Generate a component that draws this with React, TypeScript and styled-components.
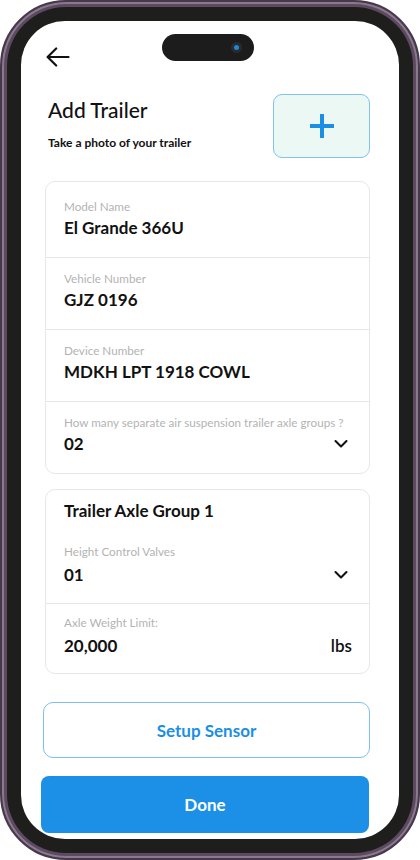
import React from "react";
import styled, { createGlobalStyle } from "styled-components";

const GlobalStyle = createGlobalStyle`
  html, body { margin: 0; padding: 0; background: #ffffff; }
  body { font-family: Lato, "Open Sans", sans-serif; color: #111111; }
  * { box-sizing: border-box; }
`;

const Phone = styled.div`
  width: 420px;
  height: 860px;
  border-radius: 66px;
  background: #5d4a61;
  border: 2px solid #47384b;
  box-shadow: inset 0 0 0 2px #8a7a8d;
  padding: 5px;
`;

const Bezel = styled.div`
  width: 100%;
  height: 100%;
  background: #1e1e1c;
  border-radius: 59px;
  padding: 14px;
`;

const Screen = styled.div`
  position: relative;
  width: 100%;
  height: 100%;
  background: #ffffff;
  border-radius: 44px;
  overflow: hidden;
  display: flex;
  flex-direction: column;
  padding: 26px 29px 0 24px;
`;

const Island = styled.div`
  position: absolute;
  left: 141px;
  top: 13px;
  width: 92px;
  height: 27px;
  border-radius: 14px;
  background: #1c1c1c;
`;

const Camera = styled.div`
  position: absolute;
  right: 12px;
  top: 8px;
  width: 11px;
  height: 11px;
  border-radius: 50%;
  background: #2a2a2e;
  display: flex;
  align-items: center;
  justify-content: center;
  &::after {
    content: "";
    width: 5px;
    height: 5px;
    border-radius: 50%;
    background: #1a8ad8;
  }
`;

const Header = styled.div`
  display: flex;
  align-items: center;
  height: 20px;
  padding-left: 1px;
`;

const BackButton = styled.button`
  border: none;
  background: none;
  padding: 0;
  display: flex;
  cursor: pointer;
`;

const TitleRow = styled.div`
  margin-top: 27px;
  display: flex;
  justify-content: space-between;
  align-items: flex-start;
`;

const TitleCol = styled.div`
  padding-top: 3px;
  padding-left: 3px;
  display: flex;
  flex-direction: column;
`;

const Title = styled.h1`
  margin: 0;
  font-size: 21px;
  line-height: 25px;
  font-weight: 500;
  color: #111111;
`;

const Subtitle = styled.p`
  margin: 14px 0 0;
  font-size: 12px;
  line-height: 14px;
  font-weight: 700;
  color: #111111;
`;

const PhotoBox = styled.button`
  width: 97px;
  height: 64px;
  border-radius: 9px;
  border: 1.5px solid #80c2f2;
  background: #ebf8f3;
  display: flex;
  align-items: center;
  justify-content: center;
  padding: 0;
  cursor: pointer;
`;

const Card = styled.div<{ $mt: number }>`
  margin-top: ${(p) => p.$mt}px;
  border: 1px solid #e7e7e7;
  border-radius: 10px;
  display: flex;
  flex-direction: column;
`;

const Field = styled.div<{ $pt?: number; $pb?: number; $divider?: boolean }>`
  padding: ${(p) => p.$pt ?? 13}px 17px ${(p) => p.$pb ?? 18}px 18px;
  border-top: ${(p) => (p.$divider ? "1px solid #e7e7e7" : "none")};
  display: flex;
  flex-direction: column;
`;

const CardTitle = styled.div`
  font-size: 17px;
  line-height: 20px;
  font-weight: 700;
  margin-bottom: 23px;
`;

const Label = styled.div`
  font-size: 11.7px;
  line-height: 14px;
  color: #b3b3b3;
  white-space: nowrap;
`;

const ValueRow = styled.div<{ $gap?: number }>`
  margin-top: ${(p) => p.$gap ?? 4}px;
  height: 22px;
  display: flex;
  align-items: center;
  justify-content: space-between;
`;

const Value = styled.span`
  font-size: 17px;
  line-height: 22px;
  font-weight: 700;
  color: #111111;
`;

const Unit = styled.span`
  font-size: 17px;
  line-height: 22px;
  font-weight: 600;
  color: #111111;
`;

const OutlineButton = styled.button`
  margin: 28px 0 0 -2px;
  width: 327px;
  height: 56px;
  border: 1px solid #7dbff0;
  border-radius: 10px;
  background: #ffffff;
  color: #1b8fe5;
  font-family: Lato, "Open Sans", sans-serif;
  font-size: 17px;
  font-weight: 700;
  cursor: pointer;
`;

const PrimaryButton = styled.button`
  margin: 18px 0 0 -4px;
  width: 328px;
  height: 57px;
  border: none;
  border-radius: 8px;
  background: #1b90e6;
  color: #ffffff;
  font-family: Lato, "Open Sans", sans-serif;
  font-size: 17px;
  font-weight: 700;
  cursor: pointer;
`;

const Chevron = () => (
  <svg width="16" height="10" viewBox="0 0 16 10" fill="none" style={{ marginRight: 3 }}>
    <polyline points="2.5,2 8,7.5 13.5,2" stroke="#111" strokeWidth="2.1" strokeLinecap="round" strokeLinejoin="round" />
  </svg>
);

const BackArrow = () => (
  <svg width="24" height="20" viewBox="0 0 24 20" fill="none">
    <path d="M22.5 10H1.8M10.2 1.5L1.6 10l8.6 8.5" stroke="#111" strokeWidth="2.2" strokeLinecap="round" strokeLinejoin="round" />
  </svg>
);

const PlusIcon = () => (
  <svg width="26" height="26" viewBox="0 0 26 26" fill="none">
    <path d="M13 1v24M1 13h24" stroke="#1b8fe3" strokeWidth="4" />
  </svg>
);

export default function App() {
  return (
    <>
      <GlobalStyle />
      <Phone>
        <Bezel>
          <Screen>
            <Island>
              <Camera />
            </Island>
            <Header>
              <BackButton aria-label="Back">
                <BackArrow />
              </BackButton>
            </Header>
            <TitleRow>
              <TitleCol>
                <Title>Add Trailer</Title>
                <Subtitle>Take a photo of your trailer</Subtitle>
              </TitleCol>
              <PhotoBox aria-label="Add photo">
                <PlusIcon />
              </PhotoBox>
            </TitleRow>

            <Card $mt={23}>
              <Field $pt={17}>
                <Label>Model Name</Label>
                <ValueRow>
                  <Value>El Grande 366U</Value>
                </ValueRow>
              </Field>
              <Field $divider>
                <Label>Vehicle Number</Label>
                <ValueRow>
                  <Value>GJZ 0196</Value>
                </ValueRow>
              </Field>
              <Field $divider>
                <Label>Device Number</Label>
                <ValueRow>
                  <Value>MDKH LPT 1918 COWL</Value>
                </ValueRow>
              </Field>
              <Field $divider>
                <Label>How many separate air suspension trailer axle groups ?</Label>
                <ValueRow>
                  <Value>02</Value>
                  <Chevron />
                </ValueRow>
              </Field>
            </Card>

            <Card $mt={15}>
              <Field $pt={11} $pb={17}>
                <CardTitle>Trailer Axle Group 1</CardTitle>
                <Label>Height Control Valves</Label>
                <ValueRow $gap={6}>
                  <Value>01</Value>
                  <Chevron />
                </ValueRow>
              </Field>
              <Field $divider $pt={11} $pb={16}>
                <Label>Axle Weight Limit:</Label>
                <ValueRow $gap={6}>
                  <Value>20,000</Value>
                  <Unit>lbs</Unit>
                </ValueRow>
              </Field>
            </Card>

            <OutlineButton>Setup Sensor</OutlineButton>
            <PrimaryButton>Done</PrimaryButton>
          </Screen>
        </Bezel>
      </Phone>
    </>
  );
}
